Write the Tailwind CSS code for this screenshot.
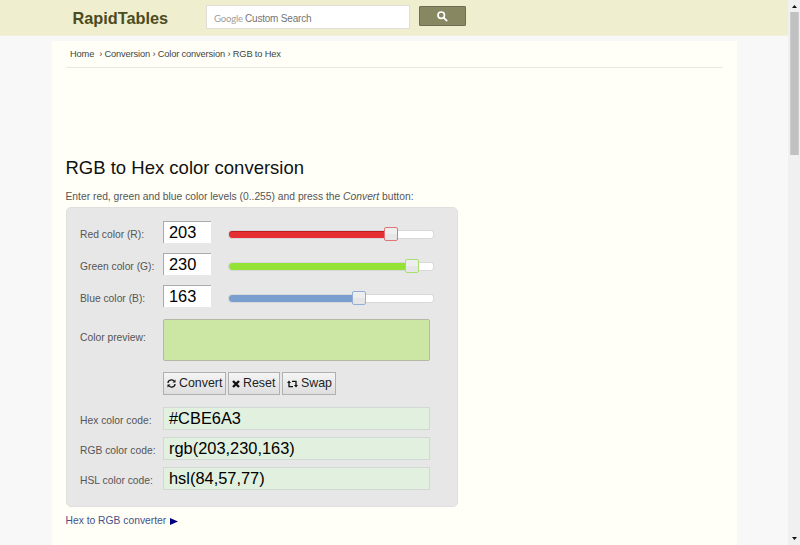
<!DOCTYPE html>
<html lang="en">
<head>
<meta charset="utf-8">
<title>RGB to Hex | Color converter</title>
<script src="https://cdn.jsdelivr.net/npm/@tailwindcss/browser@4"></script>
</head>
<body class="flex h-[545px] w-[800px] overflow-hidden bg-[#f8f8f8] font-['Liberation_Sans',Arial,sans-serif] text-[10.3px] leading-3 text-[#555]">
<div class="flex w-[788px] flex-col">
  <header class="flex h-[36px] shrink-0 items-start border-b border-[#f2f1dc] bg-[#efeecf] pl-[72.5px]">
    <a class="mt-2 w-[133.5px] text-[16.3px] leading-5 font-bold text-[#4b4b20]">RapidTables</a>
    <div class="mt-[5px] flex h-6 w-[204px] items-center border border-[#dfdfd8] bg-white pt-[3px] pl-[7px] text-[10px] tracking-[-0.2px] text-[#757575]">
      <span class="w-[31px] font-['Lato',sans-serif] text-[9.6px] text-[#a0a0a0]">Google</span><span>Custom Search</span>
    </div>
    <button class="mt-[6px] ml-[9px] flex h-5 w-[47px] items-center justify-center rounded-[1px] border border-[#6d6d50] bg-[#878762]">
      <svg class="h-[11px] w-[11px]" viewBox="0 0 13 13" fill="none" stroke="#fff" stroke-width="2"><circle cx="5" cy="5" r="3.8"/><path d="M7.8 7.8 12 12"/></svg>
    </button>
  </header>
  <main class="mt-[5px] ml-[52px] flex w-[685px] grow flex-col bg-[#fffff7] pr-[14px] pl-[13.5px]">
    <nav class="flex h-[27px] shrink-0 border-b border-[#e5e8e4] pt-[7px] pl-[4.5px] text-[9.3px] tracking-[-0.16px] whitespace-pre text-[#444]"><a>Home</a><span class="ml-[5px]">› </span><a>Conversion</a><span> › </span><a>Color conversion</a><span> › </span><a>RGB to Hex</a></nav>
    <h1 class="mt-[88px] h-6 text-[18.5px] leading-6 text-[#111]">RGB to Hex color conversion</h1>
    <p class="mt-[11px] h-[16px] whitespace-nowrap">Enter red, green and blue color levels (0..255) and press the <i>Convert</i> button:</p>
    <form class="flex h-[300px] w-[392px] shrink-0 flex-col rounded-[5px] border border-[#dfdfdf] bg-[#e7e7e7] pt-[13px] pl-[13.5px]">
      <div class="mb-[9px] flex h-[23px] items-center">
        <label class="w-[83px] pt-1">Red color (R):</label>
        <div class="mb-px h-[22px] w-[48px] border-t border-l border-[#aaa] bg-white pl-[5px] text-[16.4px] leading-[20px] text-black">203</div>
        <div class="relative mt-1 ml-[17px] h-[9px] w-[206px] rounded-[3px] border border-[#d8d8d8] bg-white">
          <div class="h-[7px] w-[160px] rounded-l-[3px] border-t border-[#bd1c20] bg-[#e52f32]"></div>
          <div class="absolute top-[-4px] left-[155px] h-[14px] w-[14px] rounded-[2px] border border-[#e07577] bg-linear-to-b from-[#eee] from-50% to-[#e6e6e6] to-50%"></div>
        </div>
      </div>
      <div class="mb-[9px] flex h-[23px] items-center">
        <label class="w-[83px] pt-1">Green color (G):</label>
        <div class="mb-px h-[22px] w-[48px] border-t border-l border-[#aaa] bg-white pl-[5px] text-[16.4px] leading-[20px] text-black">230</div>
        <div class="relative mt-1 ml-[17px] h-[9px] w-[206px] rounded-[3px] border border-[#d8d8d8] bg-white">
          <div class="h-[7px] w-[180px] rounded-l-[3px] bg-[#94e236]"></div>
          <div class="absolute top-[-4px] left-[176px] h-[14px] w-[14px] rounded-[2px] border border-[#a9df70] bg-linear-to-b from-[#eee] from-50% to-[#e6e6e6] to-50%"></div>
        </div>
      </div>
      <div class="mb-[11px] flex h-[23px] items-center">
        <label class="w-[83px] pt-1">Blue color (B):</label>
        <div class="mb-px h-[22px] w-[48px] border-t border-l border-[#aaa] bg-white pl-[5px] text-[16.4px] leading-[20px] text-black">163</div>
        <div class="relative mt-1 ml-[17px] h-[9px] w-[206px] rounded-[3px] border border-[#d8d8d8] bg-white">
          <div class="h-[7px] w-[126px] rounded-l-[3px] bg-[#7a9fce]"></div>
          <div class="absolute top-[-4px] left-[123px] h-[14px] w-[14px] rounded-[2px] border border-[#94afd5] bg-linear-to-b from-[#eee] from-50% to-[#e6e6e6] to-50%"></div>
        </div>
      </div>
      <div class="flex h-[42px] items-center">
        <label class="w-[83px] pb-1">Color preview:</label>
        <div class="h-[42px] w-[267px] rounded-[2px] border border-[#b4b9a6] bg-[#cce6a3]"></div>
      </div>
      <div class="mt-[11px] mb-[12px] ml-[83px] flex h-[23px] gap-[2px] text-[12.4px] text-[#222]">
        <button class="flex w-[63px] items-center border border-[#b0b0b0] bg-linear-to-b from-[#f5f5f5] to-[#dedede] pb-[2px] pl-[3px]">
          <svg class="mt-0.5 mr-[3px] h-[9px] w-[9px]" viewBox="0 0 9 9" fill="none" stroke="#111" stroke-width="1.3"><path d="M1 4C1 .8 5.2 0 7 2.1M8 5C8 8.2 3.8 9 2 6.9"/><path d="M8.5.5v3h-3zM.5 8.5v-3h3z" fill="#111" stroke="none"/></svg>Convert</button>
        <button class="flex w-[52px] items-center border border-[#b0b0b0] bg-linear-to-b from-[#f5f5f5] to-[#dedede] pb-[2px] pl-[3px]">
          <svg class="mt-0.5 mr-[3px] h-[8px] w-[8px]" viewBox="0 0 8 8" stroke="#111" stroke-width="2.4"><path d="m1 1 6 6M7 1 1 7"/></svg>Reset</button>
        <button class="flex w-[54px] items-center border border-[#b0b0b0] bg-linear-to-b from-[#f5f5f5] to-[#dedede] pb-[2px] pl-[4px]">
          <svg class="mt-0.5 mr-[3px] h-[8px] w-[11px]" viewBox="0 0 11 8" fill="none" stroke="#111" stroke-width="1.3"><path d="M2 2v4.6h4M5 1.4h4V6"/><path d="M0 3 2 .5 4 3zM7 5l2 2.5L11 5z" fill="#111" stroke="none"/></svg>Swap</button>
      </div>
      <div class="mb-[7px] flex h-[23px] items-center">
        <label class="w-[83px] pt-1">Hex color code:</label>
        <output class="h-[23px] w-[267px] border border-[#d2d8d2] bg-[#e1f0df] pl-[5px] text-[16.4px] leading-[21px] text-black">#CBE6A3</output>
      </div>
      <div class="mb-[7px] flex h-[23px] items-center">
        <label class="w-[83px] pt-1 whitespace-nowrap">RGB color code:</label>
        <output class="h-[23px] w-[267px] border border-[#d2d8d2] bg-[#e1f0df] pl-[5px] text-[16.4px] leading-[21px] text-black">rgb(203,230,163)</output>
      </div>
      <div class="flex h-[23px] items-center">
        <label class="w-[83px] pt-1">HSL color code:</label>
        <output class="h-[23px] w-[267px] border border-[#d2d8d2] bg-[#e1f0df] pl-[5px] text-[16.4px] leading-[21px] text-black">hsl(84,57,77)</output>
      </div>
    </form>
    <a class="mt-[8px] flex items-center text-[#46528a]">Hex to RGB converter<svg class="ml-[4px] h-[7px] w-[8px]" viewBox="0 0 8 6" preserveAspectRatio="none"><path d="M0 0 8 3 0 6z" fill="#00007c"/></svg></a>
  </main>
</div>
<aside class="flex w-3 flex-col items-center bg-[#f0f0f0]">
  <svg class="mt-[5px] h-[3px] w-[5px]" viewBox="0 0 5 3"><path d="M0 3 2.5 0 5 3z" fill="#111"/></svg>
  <div class="mt-[4px] h-[143px] w-[9px] border-x border-[#ccc] bg-[#c1c1c1]"></div>
  <svg class="mt-auto mb-[5px] h-[3px] w-[5px]" viewBox="0 0 5 3"><path d="M0 0h5L2.5 3z" fill="#111"/></svg>
</aside>
</body>
</html>
